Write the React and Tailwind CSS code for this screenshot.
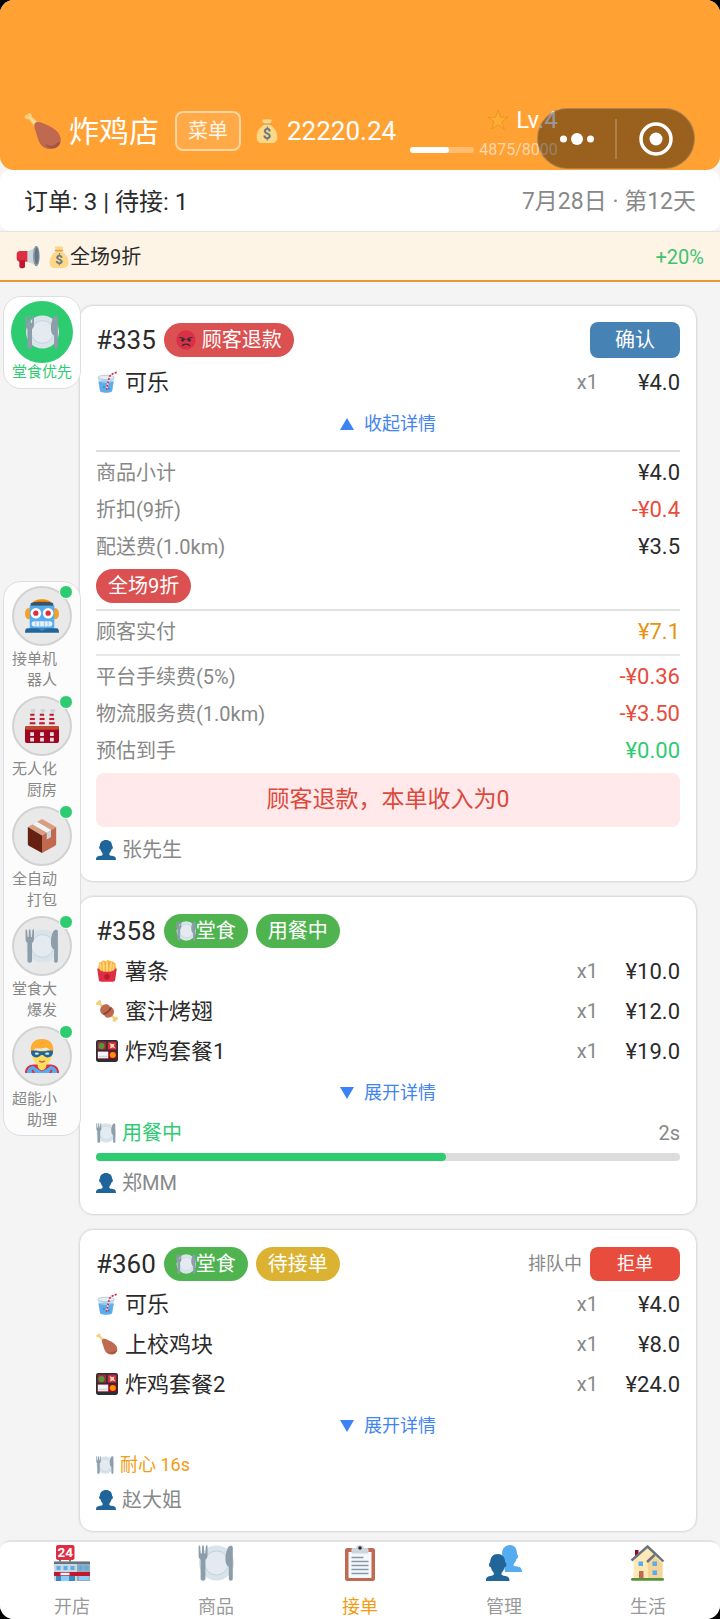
const EMOJI = {
  drumstick: (
    <>
      <path fill="#F2CF7F" d="M2.2 6.6c-1.500-.3-2.200-2-1.200-3.200.7-.8 1.600-.9 2.300-.5C3.200 1.600 4.300.6 5.500.9c1.500.3 2.200 1.700 1.700 3.100l6.400 6.200-3.500 3.700-5.600-7c-.7.300-1.600.1-2.300-.3z" />
      <path fill="#F9E0A2" d="M5 4l7 7-1 1.500L4.500 5z" />
      <path fill="#BE6950" d="M10.500 10.500c1.500-1.700 5-.9 9.500 1.200 8 2.800 14.800 8.300 14.800 14.300 0 6-4.300 9-9.800 9-8.500 0-11-6.500-12.600-12.500C11 17.500 8.500 12.500 10.500 10.500z" />
      <path fill="#A35440" d="M31 29.500c-3.300 3.300-8 3-11.500.4 1.700 2.700 4.500 4.600 7.700 4.500 3.600-.2 6.500-2.500 7.300-6.400z" />
    </>
  ),
  moneybag: (
    <>
      <path fill="#FDD888" d="M12 5c-.4-1.800-2-3.200-.6-4 1.500-.8 3 .3 4.400-.2 1.500-.6 2.800-.6 4.300 0 1.400.5 3-.6 4.400.2 1.400.800-.1 2.200-.5 4L22 8.500C29.500 12 33.500 20 33.500 27c0 6-3.500 9-8.500 9H11c-5 0-8.500-3-8.500-9C2.500 20 6.500 12 14 8.500z" />
      <path fill="#D9A35C" d="M12.300 6.200h11.400c1 0 1.600.5 1.600 1.300s-.6 1.300-1.600 1.300H12.300c-1 0-1.600-.5-1.600-1.300s.6-1.300 1.600-1.300z" />
      <text x="18" y="30" textAnchor="middle" fontSize="22" fontWeight="700" fontFamily="Roboto, sans-serif" fill="#67757F">$</text>
    </>
  ),
  star: <path fill="#FFAC33" stroke="#d98d20" strokeWidth="1" d="M18 1.500l4 12h12.500l-10.100 7.300 3.900 12L18 25.400 7.700 32.800l3.900-12L1.500 13.500H14z" />,
  megaphone: (
    <>
      <path fill="#DD2E44" d="M1 14.500C1 11 2.500 9 6 9h13v16H6c-3.500 0-5-2-5-5.500z" />
      <path fill="#BE1931" d="M5 23h8.500v9c0 2-1.200 3-2.800 3H8c-1.700 0-3-1-3-3z" />
      <path fill="#CCD6DD" d="M17 9.200C22 8.300 27 5 30 1.500V32c-3-3.500-8-5.500-13-6.500z" />
      <ellipse cx="30.500" cy="16.500" rx="5" ry="15.500" fill="#8899A6" />
      <ellipse cx="31" cy="16.500" rx="3" ry="12.500" fill="#66757F" />
    </>
  ),
  plate: (
    <>
      <circle cx="18.500" cy="18" r="17.500" fill="#D9E3EA" />
      <circle cx="18.500" cy="18" r="12" fill="#E3EBF1" stroke="#C3D1DC" strokeWidth="1" />
      <path fill="#8D9DAA" d="M.6 1.200c0-1 1.500-1 1.600 0L2.700 8c.1 1 1 1 1.100 0L4.200 1c.1-1 1.500-1 1.600 0l.4 7c.1 1 1.100 1 1.200 0l.5-7c.1-1 1.600-1 1.600 0v9.500c0 2.200-.9 3.500-2.100 4.200V33.500c0 3-4.800 3-4.800 0V14.700C1.500 14 .6 12.700.6 10.500z" />
      <path fill="#8D9DAA" d="M34.800 2.500C34.800.3 31.500 0 30 2.500c-2.500 4.500-3.500 13-1.500 17 .6 1.200 1.700 1.700 2.300 2v12c0 3 4 3 4 0z" />
    </>
  ),
  angry: (
    <>
      <circle cx="18" cy="18" r="17.500" fill="#DA2F47" />
      <path d="M7 13.500c4 0 7 1 9 3.500M29 13.500c-4 0-7 1-9 3.500" fill="none" stroke="#292F33" strokeWidth="2.200" strokeLinecap="round" />
      <circle cx="12" cy="18.500" r="2.600" fill="#292F33" />
      <circle cx="24" cy="18.500" r="2.600" fill="#292F33" />
      <path d="M11.500 28c2-3.500 11-3.500 13 0" fill="none" stroke="#292F33" strokeWidth="2.400" strokeLinecap="round" />
    </>
  ),
  cup: (
    <>
      <path fill="#CFE0EC" d="M3 10h27l-3.500 22c-.4 2.400-2.500 4-10 4s-9.600-1.600-10-4z" />
      <path fill="#5DADEC" d="M4 17c8 2.500 17 2.500 25 0l-2.500 15c-.4 2.300-2.700 3.500-10 3.500S6.900 34.300 6.500 32z" />
      <path fill="#8CCAF7" d="M4 17c7-2 18-2 25 0-7 3-18 3-25 0z" />
      <ellipse cx="16.500" cy="10.500" rx="13.500" ry="3.500" fill="#E6EEF4" stroke="#AFC0CC" strokeWidth="1.300" />
      <path d="M17 31l5-22 3-3.500L34 2" fill="none" stroke="#F3D5DA" strokeWidth="2.600" />
      <path d="M17 31l5-22 3-3.500L34 2" fill="none" stroke="#C2294B" strokeWidth="2.600" strokeDasharray="3 2.600" />
      <circle cx="13" cy="26" r="1.500" fill="#3B88C3" />
      <circle cx="21" cy="29" r="1.700" fill="#3B88C3" />
    </>
  ),
  robot: (
    <>
      <ellipse cx="4" cy="15.500" rx="4" ry="6" fill="#F4A12C" />
      <ellipse cx="32" cy="15.500" rx="4" ry="6" fill="#F4A12C" />
      <path fill="#F4900C" d="M8 4c2-5 18-5 20 0z" />
      <path fill="#3d5262" d="M6.500 4.500C8.500 2.500 27.500 2.500 29.500 4.500L31 9H5z" />
      <path fill="#55ACEE" d="M5 7h26v26H5z" />
      <path fill="#226699" d="M2.500 31h31c1.500 0 2.500 1.500 2.500 4.800H0C0 32.500 1 31 2.500 31z" />
      <path fill="#3B88C3" d="M13 31h10l-5 3z" />
      <circle cx="11.500" cy="15" r="5.600" fill="#fff" />
      <circle cx="24.500" cy="15" r="5.600" fill="#fff" />
      <circle cx="11.500" cy="15" r="2.800" fill="#DD2E44" />
      <circle cx="24.500" cy="15" r="2.800" fill="#DD2E44" />
      <rect x="7" y="23.500" width="22" height="5.500" rx="2.700" fill="#E9EFF3" />
      <path d="M11.500 23.500V29M15.500 23.500V29M20.500 23.500V29M24.500 23.500V29" stroke="#8CC8F4" strokeWidth="1" />
    </>
  ),
  factory: (
    <>
      <path fill="#E9DDE0" d="M5.500 5h4.500l1 15h-6.500zM15.700 5h4.500l1 15h-6.500zM26 5h4.500l1 15H25z" />
      <path d="M5.500 6h4.500M5.200 10.500h5.200M5 15h6M15.700 6h4.500M15.500 10.500h5.200M15 15h6M26 6h4.500M25.700 10.500h5.200M25.500 15h6" stroke="#BE1931" strokeWidth="2.200" />
      <circle cx="8.500" cy="1.500" r="2.500" fill="#CCD6DD" /><circle cx="19" cy="1.500" r="2.500" fill="#CCD6DD" /><circle cx="29.500" cy="1.500" r="2.500" fill="#CCD6DD" />
      <rect x="0" y="18" width="36" height="18" rx="2" fill="#A0041E" />
      <rect x="0" y="18" width="36" height="4" rx="2" fill="#BE4A33" />
      <path fill="#DCE3E8" d="M5.500 24.500h4v4h-4zM16 24.500h4v4h-4zM26.500 24.500h4v4h-4zM5.500 30.500h4v4h-4zM16 30.500h4v4h-4zM26.500 30.500h4v4h-4z" />
    </>
  ),
  box: (
    <>
      <path fill="#D99E82" d="M18 0l15 8.500-15 9-15-9z" />
      <path fill="#662113" d="M3 8.500l15 9V36L4.500 28.500C3.500 28 3 27.500 3 26.500z" />
      <path fill="#C1694F" d="M33 8.500l-15 9V36l13.500-7.500c1-.5 1.500-1 1.500-2z" />
      <path fill="#CCD6DD" d="M12.500 3l15 8.700v7.500l-4.500 2.600v-7.500L8 5.600z" />
      <path fill="#F0F4F7" d="M12.500 3l15 8.700L23 14.300 8 5.600z" />
    </>
  ),
  hero: (
    <>
      <path fill="#DD2E44" d="M0 36c0-5 3-9 9-9h18c6 0 9 4 9 9z" />
      <path fill="#55ACEE" d="M2 36c0-4 2.500-7 7-7.500l3 2.500 6 3.500 6-3.500 3-2.500c4.500.5 7 3.500 7 7.500z" />
      <path fill="#DD2E44" d="M8 36l-1-3 1.500-1 2 4zM28 36l1-3-1.500-1-2 4z" />
      <path fill="#FFDC5D" d="M13.500 24h9v5c0 1.500-3 4-4.500 4s-4.500-2.500-4.500-4z" />
      <path fill="#FFDC5D" d="M7.500 12h21v4c0 7-5 12.500-10.500 12.500S7.500 23 7.500 16z" />
      <path fill="#FFAC33" d="M18 0c8 0 12 5 12 11 0 3-.8 5-1.700 5.500C27.500 13 26 10 22 9c-4 1.500-9 1-11.500 1-1 1-2 3.500-2.800 6.500C6.800 16 6 14 6 11 6 5 10 0 18 0z" />
      <path fill="#226699" d="M6.500 12.500c5-1 7 .5 11.500.5s6.500-1.500 11.500-.5c.5 4-1.500 7-5.500 7-3.500 0-4-2.500-6-2.500s-2.500 2.500-6 2.500c-4 0-6-3-5.500-7z" />
      <ellipse cx="12.500" cy="15.600" rx="2.200" ry="1.200" fill="#DCE9F2" /><ellipse cx="23.500" cy="15.600" rx="2.200" ry="1.200" fill="#DCE9F2" />
      <path d="M15.500 23.500c1.500 1 3.500 1 5 0" fill="none" stroke="#C1694F" strokeWidth="1.500" strokeLinecap="round" />
    </>
  ),
  fries: (
    <>
      <path fill="#FFAC33" d="M3 18L5 5l4-2 3-2 4 1 3-2 5 2 4 1 4 3 1 12-8 6H10z" />
      <path d="M8 17L7 6M13 19L12 3M18 20V2M23 19l2-15M28 17l1-10" stroke="#FFD983" strokeWidth="3" />
      <path fill="#DD2E44" d="M2 14c3 0 3.500 1 5 3 3 3 19 3 22 0 1.500-2 2-3 5-3l-2.500 18c-.4 2.500-1.500 3.500-4 3.500h-19c-2.500 0-3.600-1-4-3.500z" />
      <circle cx="18" cy="27.500" r="4.500" fill="#BE1931" />
    </>
  ),
  meat: (
    <>
      <path d="M5 5l26 26" stroke="#F2CF7F" strokeWidth="4" />
      <circle cx="2.800" cy="5.800" r="2.800" fill="#F2CF7F" /><circle cx="6" cy="2.800" r="2.800" fill="#F2CF7F" />
      <circle cx="33.200" cy="30.200" r="2.800" fill="#F2CF7F" /><circle cx="30" cy="33.200" r="2.800" fill="#F2CF7F" />
      <path fill="#BE6950" d="M7 15C8 10 13 6 18 7c3 .5 4 3 6 5 4 1.500 6 4 5.500 8-.7 5-5 9-10 9-3 0-5-1.500-6-4-4-2-7.500-5-6.500-10z" />
      <path d="M12 23c5-1 11-6 13-11" stroke="#85402F" strokeWidth="2.600" fill="none" />
    </>
  ),
  bento: (
    <>
      <rect x="0" y="0" width="36" height="36" rx="3.500" fill="#292F33" />
      <path fill="#9E2B3C" d="M2.500 2.500h14v13.500h-14zM19 2.500h14.500v13.500H19z" />
      <circle cx="9" cy="10" r="5" fill="#5C913B" />
      <path fill="#DD2E44" d="M20 4h12.500v11H20z" />
      <path fill="#FFE3B0" d="M22 5l4 2 4-1-1 4 3 4-5-2-4 2 1-5z" />
      <path fill="#A0041E" d="M2.500 18.500h31V31h-31z" />
      <path fill="#F5F8FA" d="M3 19h17v11H3z" />
      <path d="M4 27h15" stroke="#CCD6DD" strokeWidth="2.500" />
      <circle cx="27.500" cy="24.500" r="5" fill="#F4900C" />
    </>
  ),
  person: <path fill="#20659a" d="M24 25.500c0-1.500.8-2.500 1.800-3.300 1-1.600 1.800-3.600 2.200-5.500 1.500-.3 2.300-1.700 2.300-3.400 0-1.600-.6-2.600-1.300-3C28.700 4 24.500 0 18 0S7.300 4 7 10.300c-.7.4-1.300 1.400-1.300 3 0 1.700.8 3.100 2.300 3.400.4 1.900 1.200 3.900 2.200 5.500 1 .8 1.800 1.800 1.800 3.300 0 2-2 2.500-5 3C2.500 29.300 0 30.500 0 36h36c0-5.500-2.500-6.700-7-7.500-3-.5-5-1-5-3z" />,
  people: (
    <>
      <path fill="#55ACEE" d="M27.500 20c0-1 .5-1.600 1.300-2.200.8-1.200 1.400-2.500 1.600-3.900 1-.2 1.700-1.200 1.700-2.400s-.4-1.900-1-2.200C31 3.500 28.500 0 24 0s-8 3.500-8 8.500L19 27h17c0-4-2-5-5-5.400-2.400-.3-3.500-.6-3.500-1.600z" />
      <path fill="#226699" d="M15.500 29c0-1.300.5-1.900 1.200-2.400.9-1.300 1.600-2.700 1.800-4.300 1.200-.3 1.900-1.300 1.900-2.600s-.5-2-1.100-2.300C19 12.500 16.500 9 11.700 9S4.400 12.500 4.100 17.400c-.6.3-1.100 1-1.100 2.300s.7 2.300 1.900 2.600c.2 1.600.9 3 1.800 4.300.7.5 1.200 1.100 1.200 2.400 0 1.200-1.500 1.600-3.700 2C1 31.600 0 32.500 0 36h23.500c0-3.500-1-4.400-4.200-5-2.300-.4-3.800-.8-3.800-2z" />
    </>
  ),
  store: (
    <>
      <path fill="#66757F" d="M5 14h2v3H5zM15 14h2v3h-2z" />
      <rect x="2" y="0" width="18.500" height="15" rx="2" fill="#DD2E44" />
      <text x="11.200" y="12.200" textAnchor="middle" fontSize="13.500" fontWeight="700" fontFamily="Roboto, sans-serif" fill="#fff">24</text>
      <rect x="0" y="16.500" width="36" height="19.500" rx="1.500" fill="#CCD6DD" />
      <path fill="#99AAB5" d="M23 17h13v19H23z" />
      <path fill="#66757F" d="M0 16.500h36v2.500H0z" />
      <path fill="#55ACEE" d="M2.500 21h4v4h-4zM9.500 21h4v4h-4zM16.500 21h4v4h-4zM24.500 21h4v4h-4zM30.500 21h4v4h-4z" />
      <path fill="#BE1931" d="M0 27h36v4H0z" />
      <path fill="#fff" d="M6.500 27.800h9v2.500h-9z" />
      <path fill="#3B88C3" d="M2 31h19v5H2z" /><path fill="#8CCAF7" d="M7 31h8v5H7zM25 31h10v4H25z" />
    </>
  ),
  clipboard: (
    <>
      <rect x="3" y="3" width="30" height="33" rx="2.500" fill="#BE6950" />
      <path fill="#F5F8FA" d="M6.500 7h23v26h-23z" />
      <path d="M9.500 12.500h12M9.500 16.500h17M9.500 20.500h17M9.500 24.500h17M9.500 28.500h17" stroke="#8899A6" strokeWidth="1.400" />
      <path fill="#CCD6DD" d="M10.500 3H14c.5-2 2-3 4-3s3.500 1 4 3h3.500c1.500 0 1.500 5.500 0 5.500h-15C9 8.500 9 3 10.500 3z" />
      <circle cx="18" cy="3" r="1.800" fill="#292F33" />
    </>
  ),
  house: (
    <>
      <path fill="#A0041E" d="M5 5h3.500v8H5z" />
      <path fill="#FFE8B6" d="M3.500 15L18 2l15 14v18h-29.500z" />
      <path fill="#F3D59A" d="M18 16l6-5.500 8 7.500v16H18z" />
      <path d="M1.500 15.500L17.500 1.500 25 8.500l8.500 8M17 17l7.500-7" stroke="#66757F" strokeWidth="2.400" fill="none" />
      <path fill="#55ACEE" d="M8.500 16.500h4.500V21H8.500zM22.500 16.500H27V21h-4.500zM22.500 25.500H27V30h-4.500z" />
      <path fill="#C1694F" d="M9 26h4.500v8H9z" />
      <rect x="1" y="33" width="33" height="2.800" rx="1.400" fill="#5C913B" />
    </>
  ),
};

function Emoji({ name, className }) {
  return (
    <svg viewBox="0 0 36 36" aria-hidden="true" className={`shrink-0 ${className}`}>
      {EMOJI[name]}
    </svg>
  );
}

function Badge({ color, icon, gap, children }) {
  return (
    <span className={`flex h-[34px] items-center rounded-full px-3 text-xl text-white ${gap ? "gap-[6px]" : ""} ${color}`}>
      {icon && <Emoji name={icon} className="size-5" />}
      {children}
    </span>
  );
}

function Item({ icon, name, price }) {
  return (
    <li className="flex h-10 items-center">
      <Emoji name={icon} className="mr-[7px] size-[22px]" />
      <span className="flex-1 text-[22px]">{name}</span>
      <span className="text-xl text-[#888]">x1</span>
      <span className="w-[82px] text-right text-[22px]">{price}</span>
    </li>
  );
}

function Line({ label, value, color = "text-[#2b2b2b]" }) {
  return (
    <div className="flex h-[37px] items-center justify-between">
      <dt className="text-xl text-[#888]">{label}</dt>
      <dd className={`text-[22px] ${color}`}>{value}</dd>
    </div>
  );
}

function Toggle({ open }) {
  return (
    <button type="button" className="flex h-11 w-full items-center justify-center gap-[10px] text-lg text-[#4285ee]">
      <svg viewBox="0 0 14 12" aria-hidden="true" className="h-3 w-[14px]">
        <path fill="#3b82f6" d={open ? "M7 0l7 12H0z" : "M7 12L0 0h14z"} />
      </svg>
      {open ? "收起详情" : "展开详情"}
    </button>
  );
}

function Customer({ name }) {
  return (
    <div className="flex h-9 items-center gap-[6px] text-xl text-[#888]">
      <Emoji name="person" className="size-5" />
      {name}
    </div>
  );
}

function Order({ id, badges, action, items, open, children, customer }) {
  return (
    <article className="rounded-[14px] border border-[#dcdcde] bg-white px-4 pt-4 pb-[13px] shadow-[0_0_1px_1px_rgba(0,0,0,0.04)]">
      <header className={`flex items-center gap-2 ${open ? "pb-1" : "pb-[2px]"}`}>
        <h2 className="text-[26px] leading-9">{id}</h2>
        {badges}
        <div className="ml-auto flex items-center gap-2">{action}</div>
      </header>
      <ul>
        {items.map((item) => (
          <Item key={item.name} {...item} />
        ))}
      </ul>
      <Toggle open={open} />
      {children}
      <Customer name={customer} />
    </article>
  );
}

const HELPERS = [
  ["robot", "接单机器人"],
  ["factory", "无人化厨房"],
  ["box", "全自动打包"],
  ["plate", "堂食大爆发"],
  ["hero", "超能小助理"],
];

const TABS = [
  ["store", "开店"],
  ["plate", "商品"],
  ["clipboard", "接单"],
  ["people", "管理"],
  ["house", "生活"],
];

export default function App() {
  return (
    <div className="bg-black font-[Roboto,'Noto_Sans_CJK_SC',sans-serif] text-[#2b2b2b]">
      <div className="flex min-h-screen flex-col overflow-hidden rounded-[14px] bg-[#f4f4f5]">
        <header className="relative rounded-b-[14px] bg-[#ffa133] px-6 pt-[100px] pb-2 text-white">
          <div className="flex h-[62px] items-center">
            <Emoji name="drumstick" className="size-[38px]" />
            <h1 className="ml-[7px] text-[30px]">炸鸡店</h1>
            <button type="button" className="ml-4 h-10 rounded-lg border-2 border-white/50 bg-white/10 px-[11px] text-xl text-white/90">菜单</button>
            <Emoji name="moneybag" className="mr-2 ml-[14px] size-6" />
            <span className="text-[26px]">22220.24</span>
            <div className="mt-[5px] ml-[14px] flex flex-col items-end">
              <div className="flex items-center gap-[7px] text-[24px] leading-8">
                <Emoji name="star" className="size-[22px]" />
                Lv.4
              </div>
              <div className="flex items-center gap-[5px] text-base leading-7 text-white/60">
                <div role="progressbar" aria-label="经验" aria-valuenow={4875} aria-valuemax={8000} className="h-[6px] w-16 rounded-full bg-white/30">
                  <div className="h-full w-3/5 rounded-full bg-white" />
                </div>
                4875/8000
              </div>
            </div>
          </div>
          <div className="absolute top-[108px] right-[25px] flex h-[61px] w-[158px] items-center rounded-full border border-white/20 bg-black/40">
            <button type="button" aria-label="更多" className="flex flex-1 justify-center">
              <svg viewBox="0 0 34 12" className="h-3 w-[34px]" fill="#fff">
                <circle cx="3.500" cy="6" r="3.500" /><circle cx="17" cy="6" r="6" /><circle cx="30.500" cy="6" r="3.500" />
              </svg>
            </button>
            <span className="h-10 w-[2px] bg-white/20" />
            <button type="button" aria-label="关闭" className="flex flex-1 justify-center">
              <svg viewBox="0 0 34 34" className="size-[34px]">
                <circle cx="17" cy="17" r="15" fill="none" stroke="#fff" strokeWidth="3.500" /><circle cx="17" cy="17" r="6.500" fill="#fff" />
              </svg>
            </button>
          </div>
        </header>

        <div className="flex h-[61px] items-center justify-between rounded-[10px] bg-white px-6 pt-[3px]">
          <span className="text-2xl">订单: 3 | 待接: 1</span>
          <span className="text-[23px] text-[#888]">7月28日 · 第12天</span>
        </div>

        <div className="flex h-[51px] items-center border-t border-b-2 border-t-[#e3e3e3] border-b-[#e9953a] bg-[#fef4e6] px-4 pt-[2px] text-xl">
          <Emoji name="megaphone" className="mr-2 size-6" />
          <Emoji name="moneybag" className="size-[22px]" />
          <span className="flex-1">全场9折</span>
          <span className="text-[#3cc472]">+20%</span>
        </div>

        <main className="relative flex flex-1 flex-col gap-[14px] pt-[23px] pr-[23px] pb-2 pl-[79px]">
          <Order
            open
            id="#335"
            customer="张先生"
            badges={<Badge color="bg-[#db5050]" icon="angry" gap>顾客退款</Badge>}
            action={<button type="button" className="h-9 w-[90px] rounded-lg bg-[#4682b4] text-xl text-white">确认</button>}
            items={[{ icon: "cup", name: "可乐", price: "¥4.0" }]}
          >
            <dl className="mt-1 border-t-2 border-[#dedede] pt-[2px]">
              <Line label="商品小计" value="¥4.0" />
              <Line label="折扣(9折)" value="-¥0.4" color="text-[#e74c3c]" />
              <Line label="配送费(1.0km)" value="¥3.5" />
            </dl>
            <div className="mt-1 mb-[6px] flex">
              <Badge color="bg-[#db5050]">全场9折</Badge>
            </div>
            <dl className="border-t-2 border-[#e2e2e2] pt-[2px]">
              <Line label="顾客实付" value="¥7.1" color="text-[#e8920f]" />
            </dl>
            <dl className="mt-1 border-t-2 border-[#e8e8e8] pt-[2px]">
              <Line label="平台手续费(5%)" value="-¥0.36" color="text-[#e74c3c]" />
              <Line label="物流服务费(1.0km)" value="-¥3.50" color="text-[#e74c3c]" />
              <Line label="预估到手" value="¥0.00" color="text-[#2ecc71]" />
            </dl>
            <p className="mt-1 mb-[5px] rounded-lg bg-[#ffe9eb] text-center text-[23px] leading-[54px] text-[#db4a3c]">顾客退款，本单收入为0</p>
          </Order>

          <Order
            id="#358"
            customer="郑MM"
            badges={
              <>
                <Badge color="bg-[#4fb44f]" icon="plate">堂食</Badge>
                <Badge color="bg-[#4fb44f]">用餐中</Badge>
              </>
            }
            items={[
              { icon: "fries", name: "薯条", price: "¥10.0" },
              { icon: "meat", name: "蜜汁烤翅", price: "¥12.0" },
              { icon: "bento", name: "炸鸡套餐1", price: "¥19.0" },
            ]}
          >
            <div className="flex h-9 items-center gap-[6px] text-xl text-[#2ecc71]">
              <Emoji name="plate" className="size-5" />
              用餐中
              <span className="ml-auto text-[#888]">2s</span>
            </div>
            <div role="progressbar" aria-label="用餐中" aria-valuenow={60} className="mt-[2px] mb-1 h-2 rounded-full bg-[#dcdcdc]">
              <div className="h-full w-3/5 rounded-full bg-[#2ecc71]" />
            </div>
          </Order>

          <Order
            id="#360"
            customer="赵大姐"
            badges={
              <>
                <Badge color="bg-[#4fb44f]" icon="plate">堂食</Badge>
                <Badge color="bg-[#dbb232]">待接单</Badge>
              </>
            }
            action={
              <>
                <span className="text-lg text-[#888]">排队中</span>
                <button type="button" className="h-[34px] w-[90px] rounded-lg bg-[#e74c3c] text-lg text-white">拒单</button>
              </>
            }
            items={[
              { icon: "cup", name: "可乐", price: "¥4.0" },
              { icon: "drumstick", name: "上校鸡块", price: "¥8.0" },
              { icon: "bento", name: "炸鸡套餐2", price: "¥24.0" },
            ]}
          >
            <div className="flex h-[34px] items-center gap-[6px] text-lg text-[#f39c12]">
              <Emoji name="plate" className="size-[18px]" />
              耐心 16s
            </div>
          </Order>

          <button type="button" className="absolute top-[14px] left-[3px] flex w-[78px] flex-col items-center rounded-[18px] border border-[#dedee0] bg-white pt-1 pb-[7px] text-[15px] text-[#2ecc71]">
            <span className="flex size-[62px] items-center justify-center rounded-full bg-[#2ecc71]">
              <Emoji name="plate" className="size-[34px]" />
            </span>
            <span className="leading-[18px]">堂食优先</span>
          </button>

          <ul className="absolute top-[299px] left-[3px] flex w-[78px] flex-col gap-[5px] rounded-[18px] border border-[#dedee0] bg-[#fcfcfc] px-2 py-1">
            {HELPERS.map(([icon, label]) => (
              <li key={icon}>
                <button type="button" className="relative flex flex-col gap-[3px]">
                  <span className="flex size-[60px] items-center justify-center rounded-full border-2 border-[#d2d2d2] bg-[#e9e9e9]">
                    <Emoji name={icon} className="size-[34px]" />
                  </span>
                  <span className="absolute -top-px -right-px size-[14px] rounded-full border border-white bg-[#2ecc71]" />
                  <span className="w-[45px] text-right text-[15px] leading-[21px] text-[#888]">{label}</span>
                </button>
              </li>
            ))}
          </ul>
        </main>

        <nav className="grid grid-cols-5 rounded-t-[10px] border-t-2 border-[#e2e2e2] bg-white pt-[3px]">
          {TABS.map(([icon, label]) => (
            <a key={label} href="#" className={`flex flex-col items-center gap-[14px] text-lg leading-6 ${label === "接单" ? "text-[#f39c12]" : "text-[#999]"}`}>
              <Emoji name={icon} className="size-9" />
              {label}
            </a>
          ))}
        </nav>
      </div>
    </div>
  );
}
